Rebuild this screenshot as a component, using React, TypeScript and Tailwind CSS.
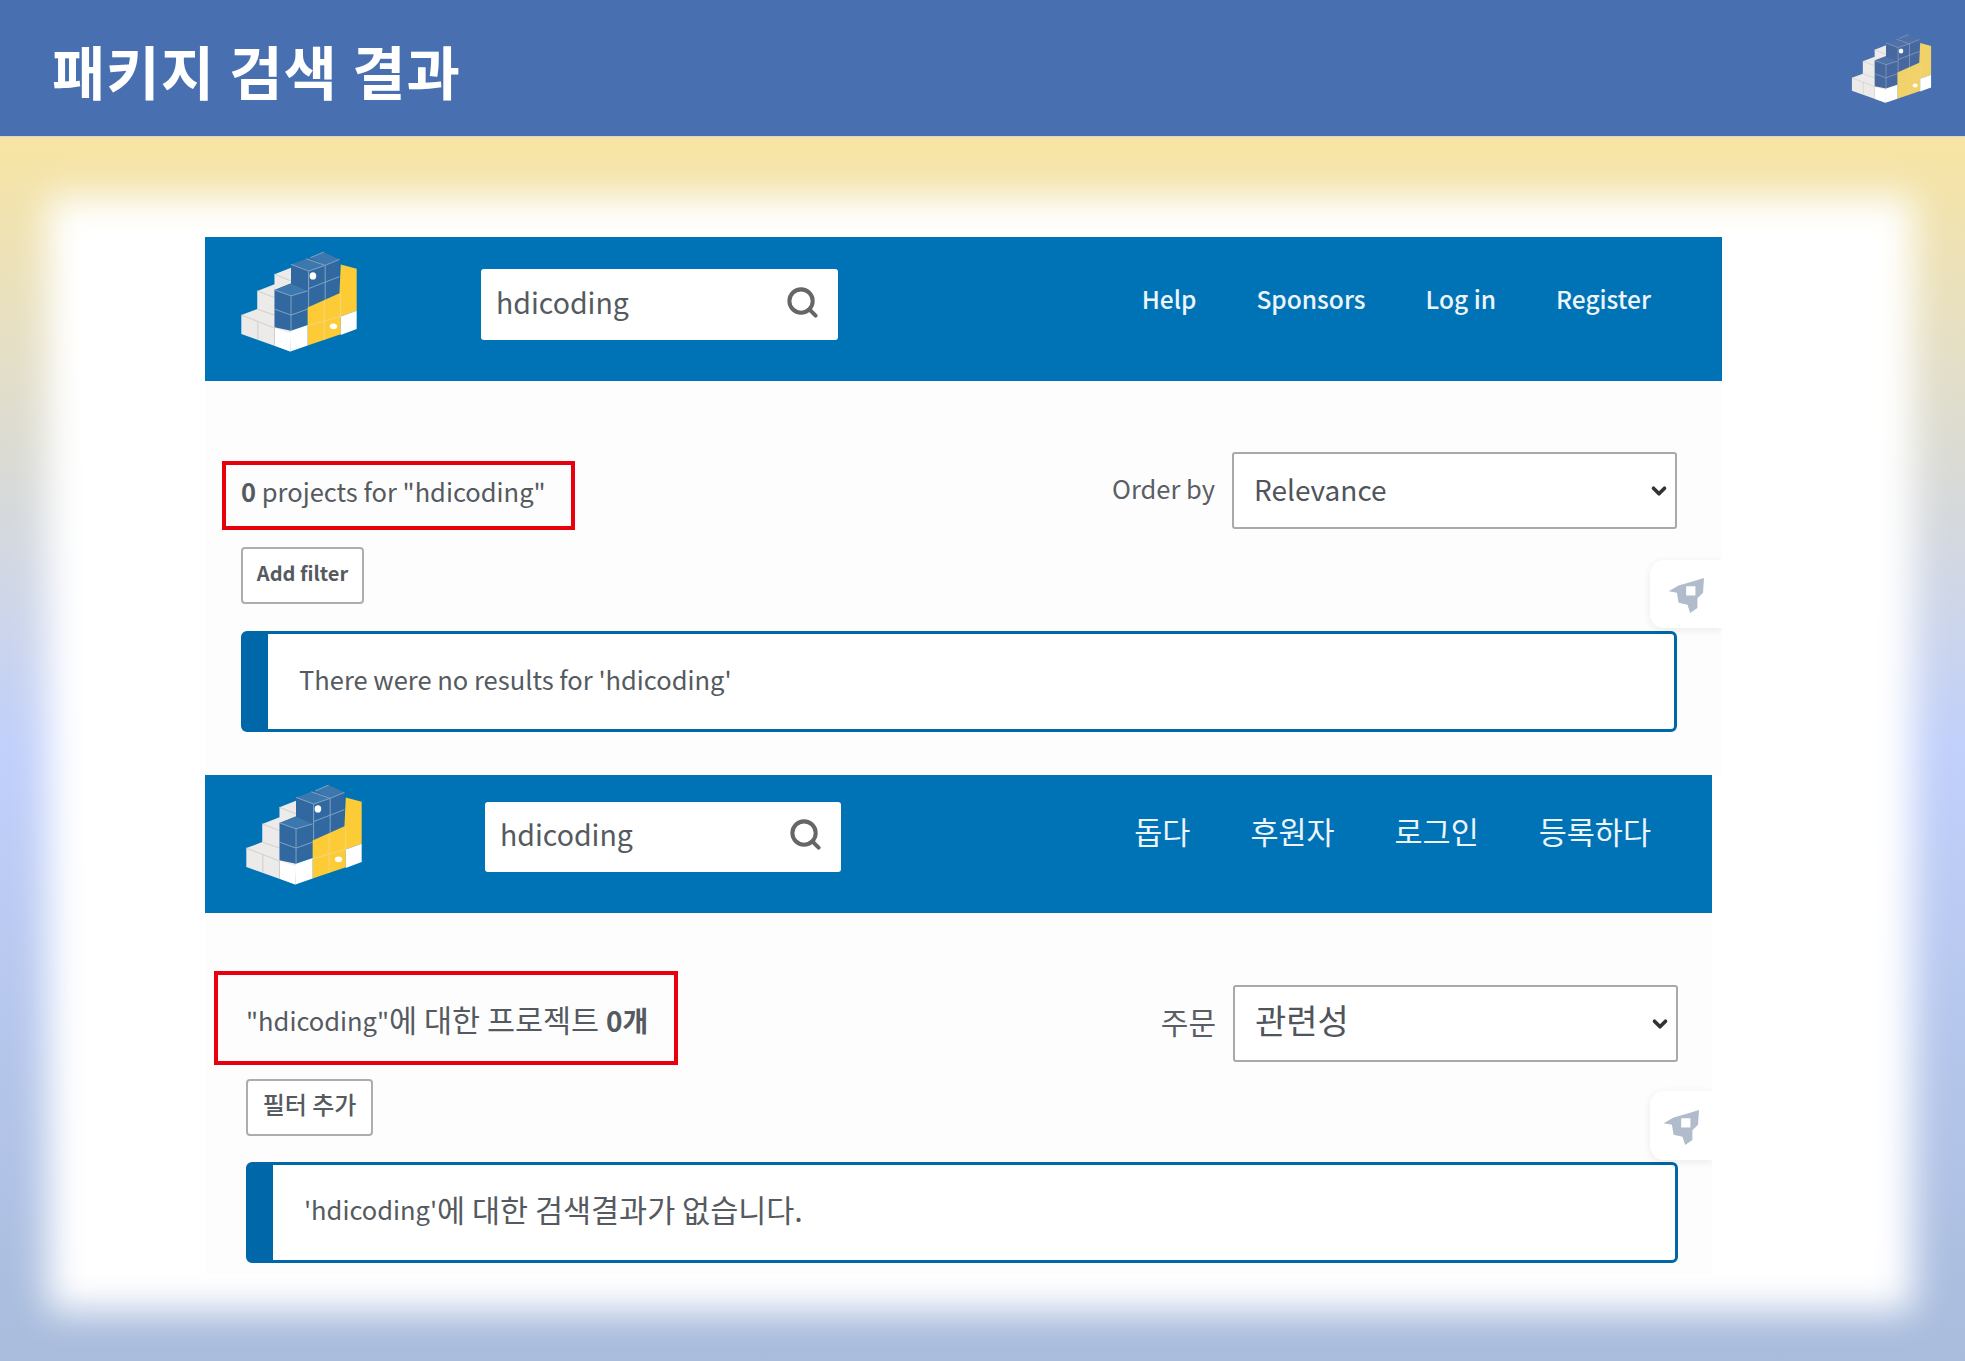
import { ChevronDown, Search } from "lucide-react";

// Slide: PyPI search result, English page above and translated page below.

const FONT = "font-['Noto_Sans_CJK_KR','Noto_Sans',sans-serif]";

type LogoProps = {
  className: string;
  blue?: string;
  blueDark?: string;
  yellow?: string;
  line?: string;
};

function PyPILogo({
  className,
  blue = "#30689f",
  blueDark = "#3c78ae",
  yellow = "#fccb36",
  line = "#7fa3c6",
}: LogoProps) {
  return (
    <svg viewBox="118 62 356 310" className={className} aria-hidden>
      {/* white stairs */}
      <polygon points="122,258 170,240 170,185 222,165 222,135 272,115 272,305 270,368 122,315" fill="#ecebe9" />
      <polygon points="222,297 272,312 270,368 222,350" fill="#ffffff" />
      <path d="M122 258L222 297M172 276V332M222 297V350M170 185L222 205M170 240L222 258M222 135L272 155" fill="none" stroke="#cfcfcf" strokeWidth="3" />
      {/* blue body */}
      <polygon points="272,105 330,85 370,68 418,90 418,192 322,235 322,285 272,305 222,295 222,182 272,163" fill={blue} />
      <polygon points="272,105 318,88 375,108 325,125" fill={blueDark} />
      <polygon points="330,85 370,68 418,90 375,108" fill={blueDark} />
      <polygon points="222,182 270,163 322,185 272,200" fill={blueDark} />
      <path d="M272 105L325 125L375 108L418 90M325 125V235M375 108V212M325 178L418 142M222 240L272 258L322 240M272 200V305M222 182L272 200L322 185M318 88L375 108M370 68L330 85" fill="none" stroke={line} strokeWidth="3" />
      {/* yellow body */}
      <polygon points="322,235 418,192 422,105 470,118 470,245 422,262 422,316 322,350" fill={yellow} />
      <path d="M322 290L422 262M372 215V332M422 192V262" fill="none" stroke="#f3d67e" strokeWidth="3" />
      {/* white corners */}
      <polygon points="272,305 322,288 322,350 270,368" fill="#ffffff" />
      <polygon points="422,262 470,245 470,300 422,318" fill="#ffffff" />
      {/* eyes */}
      <ellipse cx="338" cy="140" rx="10" ry="11" fill="#ffffff" />
      <ellipse cx="400" cy="292" rx="11" ry="9" fill="#ffffff" />
    </svg>
  );
}

function Rocket() {
  return (
    <svg viewBox="200 444 118 112" className="h-[37px] w-[39px]" aria-hidden>
      <path
        fillRule="evenodd"
        d="M275 458L312 447L309 492L292 508L292 538L270 553L262 528L235 522L230 492L205 487L235 470ZM258 472V500H286V472Z"
        fill="#b0bccb"
      />
    </svg>
  );
}

function SearchBox({ className }: { className: string }) {
  return (
    <div className={`flex items-center justify-between rounded-[3px] bg-white pb-[5px] pl-[15px] pr-[18px] text-[28.5px] text-[#555a60] ${className}`}>
      <span>hdicoding</span>
      <Search className="h-[35px] w-[35px] text-[#666]" strokeWidth={2.75} />
    </div>
  );
}

function SortSelect({
  label,
  value,
  className,
  labelClass,
  valueClass,
}: {
  label: string;
  value: string;
  className: string;
  labelClass: string;
  valueClass: string;
}) {
  return (
    <div className={`flex items-center gap-[17px] ${className}`}>
      <span className={`text-[#5a5f66] ${labelClass}`}>{label}</span>
      <div className="flex h-[77px] w-[445px] items-center justify-between rounded-[3px] border-2 border-[#a9a9a9] bg-white pl-[20px] pr-[5px] text-[#50555b]">
        <span className={valueClass}>{value}</span>
        <ChevronDown className="h-[22px] w-[22px] text-[#333]" strokeWidth={4} />
      </div>
    </div>
  );
}

function AddFilter({ label, className }: { label: string; className: string }) {
  return (
    <div className={`flex h-[57px] items-center justify-center rounded-[4px] border-2 border-[#adadad] bg-white text-[#555a60] ${className}`}>
      {label}
    </div>
  );
}

function Alert({ children, className }: { children: React.ReactNode; className: string }) {
  return (
    <div className={`flex h-[101px] items-center rounded-[6px] border-[3px] border-l-[27px] border-[#0067a8] bg-white pl-[31px] text-[#555a60] ${className}`}>
      {children}
    </div>
  );
}

function RocketTab({ className }: { className: string }) {
  return (
    <div className={`absolute right-0 flex items-center justify-center rounded-l-[14px] bg-white pt-[3px] shadow-[0_2px_8px_rgba(0,0,0,0.08)] ${className}`}>
      <Rocket />
    </div>
  );
}

function EnglishPage() {
  return (
    <section className="w-[1517px]">
      <header className="flex h-[144px] items-start bg-[#0073b7] pl-[35px] pr-[71px]">
        <PyPILogo className="mt-[13px] h-[103px] w-[118px] shrink-0" />
        <SearchBox className="ml-[123px] mt-[32px] h-[71px] w-[357px]" />
        <nav className="ml-auto mt-[41px] flex gap-[60px] text-[24.5px] font-medium leading-[42px] text-[#eef5fa]">
          <span>Help</span>
          <span>Sponsors</span>
          <span>Log in</span>
          <span>Register</span>
        </nav>
      </header>
      <div className="relative overflow-hidden bg-[#fdfdfd] pb-[43px] pl-[17px] pr-[45px] pt-[71px]">
        <div className="flex items-start justify-between">
          <div className="mt-[9px] flex h-[69px] w-[353px] items-center whitespace-pre border-4 border-[#e8000f] pb-[8px] pl-[15px] text-[25.5px] text-[#555a60]">
            <b className="font-bold">0</b> projects for "hdicoding"
          </div>
          <SortSelect
            label="Order by"
            value="Relevance"
            className=""
            labelClass="pb-[5px] text-[25.5px]"
            valueClass="pb-[4px] text-[28px]"
          />
        </div>
        <AddFilter label="Add filter" className="ml-[19px] mt-[17px] w-[123px] pb-[5px] text-[20px] font-bold" />
        <Alert className="ml-[19px] mt-[27px] pb-[4px] text-[25.5px]">There were no results for 'hdicoding'</Alert>
        <RocketTab className="top-[179px] h-[68px] w-[72px]" />
      </div>
    </section>
  );
}

function KoreanPage() {
  return (
    <section className="w-[1507px]">
      <header className="flex h-[138px] items-start bg-[#0073b7] pl-[40px] pr-[61px]">
        <PyPILogo className="mt-[8px] h-[103px] w-[118px] shrink-0" />
        <SearchBox className="ml-[122px] mt-[27px] h-[70px] w-[356px]" />
        <nav className="ml-auto mt-[35px] flex gap-[60px] text-[30.5px] leading-[42px] text-[#eef5fa]">
          <span>돕다</span>
          <span>후원자</span>
          <span>로그인</span>
          <span>등록하다</span>
        </nav>
      </header>
      <div className="relative overflow-hidden bg-[#fdfdfd] pb-[12px] pl-[9px] pr-[34px] pt-[58px]">
        <div className="flex items-start justify-between">
          <div className="flex h-[94px] w-[464px] items-center whitespace-pre border-4 border-[#e8000f] pl-[28px] pt-[4px] text-[30.5px] text-[#555a60]">
            <span className="text-[25.5px]">"hdicoding"</span>에 대한 프로젝트 <b className="text-[28px] font-bold">0개</b>
          </div>
          <SortSelect
            label="주문"
            value="관련성"
            className="mt-[14px]"
            labelClass="pb-[5px] text-[30px]"
            valueClass="pb-[8px] text-[34px]"
          />
        </div>
        <AddFilter label="필터 추가" className="ml-[32px] mt-[14px] w-[127px] pb-[8px] text-[24px] font-medium" />
        <Alert className="ml-[32px] mt-[26px] pb-[6px] text-[30.5px]">
          <span className="text-[25.5px]">'hdicoding'</span>에 대한 검색결과가 없습니다.
        </Alert>
        <RocketTab className="top-[178px] h-[69px] w-[62px]" />
      </div>
    </section>
  );
}

export default function App() {
  return (
    <div className={`flex h-[1361px] w-[1965px] flex-col overflow-hidden ${FONT}`}>
      <header className="flex h-[137px] shrink-0 items-center justify-between border-b border-[#d8d8d0] bg-[#4870b0] pl-[52px] pr-[33px]">
        <h1 className="mt-[4px] text-[58px] font-bold tracking-[1px] text-white">패키지 검색 결과</h1>
        <PyPILogo
          className="h-[71px] w-[81px]"
          blue="#47689f"
          blueDark="#4f71a8"
          yellow="#f0d268"
          line="#8da3c4"
        />
      </header>
      <main className="relative flex-1 bg-gradient-to-b from-[#f8e5a3] via-[#c1d0fb] via-50% to-[#a9bcdc]">
        {/* soft white sheet behind the screenshots */}
        <div className="absolute bottom-[50px] left-[48px] right-[52px] top-[60px] bg-white blur-[18px]" />
        <div className="relative pl-[205px] pt-[100px]">
          <EnglishPage />
          <KoreanPage />
        </div>
      </main>
    </div>
  );
}
